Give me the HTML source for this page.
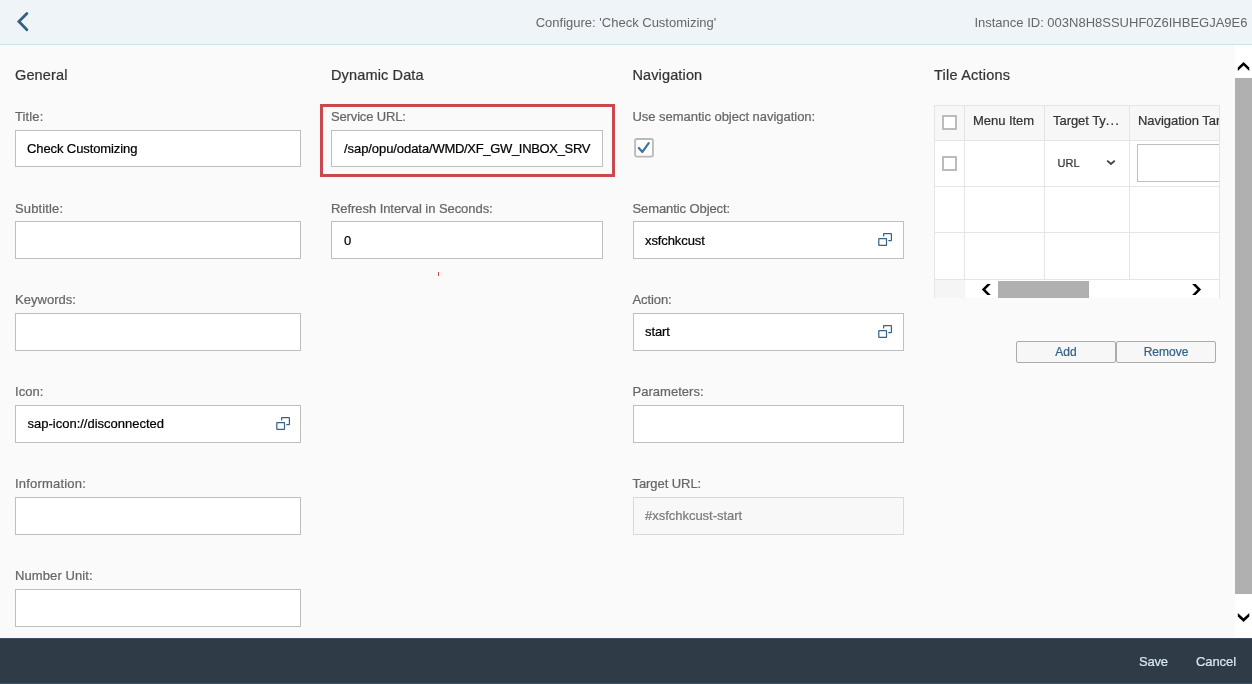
<!DOCTYPE html>
<html>
<head>
<meta charset="utf-8">
<title>Configure: 'Check Customizing'</title>
<style>
*{box-sizing:border-box;margin:0;padding:0}
html,body{width:1252px;height:684px;overflow:hidden}
body{background:#fafafa;font-family:"Liberation Sans",sans-serif;position:relative;color:#333}
#root{position:absolute;left:0;top:0;width:1252px;height:684px;overflow:hidden;will-change:transform;transform:translateZ(0)}
.abs{position:absolute}
#hdr{position:absolute;left:0;top:0;width:1252px;height:45px;background:#eff4f9;border-bottom:1px solid #d1e0ee}
#hdr .t{position:absolute;top:1px;height:44px;line-height:44px;font-size:13px;color:#666;white-space:nowrap}
#ftr{position:absolute;left:0;top:638px;width:1252px;height:46px;background:#2f3c48;border-top:1px solid #3f5161;border-bottom:1px solid #3f5161}
#ftr .b{position:absolute;top:0;height:44px;line-height:46px;font-size:13px;color:#d8e6f3;white-space:nowrap;letter-spacing:-0.25px}
.sec{position:absolute;letter-spacing:0.14px;font-size:14.5px;color:#333;line-height:20px;height:20px;white-space:nowrap;top:65px}
.lbl{position:absolute;font-size:13px;color:#666;line-height:16px;height:16px;white-space:nowrap;letter-spacing:0.03px}
.inp{position:absolute;height:38px;background:#fff;border:1px solid #bfbfbf;font-size:13px;color:#000;line-height:36px;padding-left:11px;white-space:nowrap;overflow:hidden;letter-spacing:-0.1px}
.inp.ro{background:#f8f8f8;border-color:#d9d9d9;color:#7a7a7a}
.c1{left:15px;width:286px}
.c2{left:331px;width:272px}
.c3{left:633px;width:271px}
.vh{position:absolute;width:14px;height:13px}
#tbl{position:absolute;left:934px;top:105px;width:286px;height:193px;overflow:hidden}
#tbl .hl{position:absolute;left:0;width:286px;height:1px;background:#e5e5e5}
#tbl .vl{position:absolute;top:0;width:1px;height:175px;background:#e5e5e5}
#tbl .th{position:absolute;top:6px;height:20px;line-height:20px;font-size:13px;color:#333;white-space:nowrap;letter-spacing:-0.05px}
#tbl .cb{position:absolute;width:15px;height:15px;background:#fff;border:2px solid #bcbcbc}
.btn{position:absolute;top:341px;width:100px;height:22px;background:#f7f7f7;border:1px solid #ababab;border-radius:2px;font-size:12px;line-height:20px;text-align:center;color:#346187}
.sec,.lbl,.inp,#tbl .th,.btn,#ftr .b,.url{-webkit-text-stroke:0.22px currentColor}
</style>
</head>
<body>
<div id="root">

<!-- header -->
<div id="hdr">
  <svg class="abs" style="left:14px;top:9px" width="18" height="26" viewBox="0 0 18 26"><path d="M12.9 4.5 L4.9 12.6 L12.9 20.7" fill="none" stroke="#346187" stroke-width="2.8" stroke-linecap="round" stroke-linejoin="miter"/></svg>
  <div class="t" style="left:0;width:1252px;text-align:center">Configure: 'Check Customizing'</div>
  <div class="t" style="right:4.5px">Instance ID: 003N8H8SSUHF0Z6IHBEGJA9E6</div>
</div>

<!-- column 1 : General -->
<div class="sec" style="left:15px">General</div>
<div class="lbl" style="left:15px;top:109px;letter-spacing:0.13px">Title:</div>
<div class="inp c1" style="top:130px;height:37px">Check Customizing</div>
<div class="lbl" style="left:15px;top:201px;letter-spacing:0.13px">Subtitle:</div>
<div class="inp c1" style="top:221px"></div>
<div class="lbl" style="left:15px;top:292px">Keywords:</div>
<div class="inp c1" style="top:313px"></div>
<div class="lbl" style="left:15px;top:384px">Icon:</div>
<div class="inp c1" style="top:405px;letter-spacing:0;padding-left:11.5px">sap-icon://disconnected</div>
<div class="lbl" style="left:15px;top:476px;letter-spacing:0.2px">Information:</div>
<div class="inp c1" style="top:497px"></div>
<div class="lbl" style="left:15px;top:568px;letter-spacing:0.1px">Number Unit:</div>
<div class="inp c1" style="top:589px"></div>

<!-- column 2 : Dynamic Data -->
<div class="sec" style="left:331px">Dynamic Data</div>
<div class="abs" style="left:320px;top:104px;width:295px;height:73px;border:3px solid #c9494e"></div>
<div class="lbl" style="left:331px;top:109px;letter-spacing:-0.15px">Service URL:</div>
<div class="inp c2" style="top:130px;height:37px;padding-left:12px;letter-spacing:-0.215px"><span style="letter-spacing:-0.07px">/sap/opu/odata/</span><span style="letter-spacing:-0.33px">WMD/XF_GW_INBOX_SRV</span></div>
<div class="lbl" style="left:331px;top:201px;letter-spacing:-0.06px">Refresh Interval in Seconds:</div>
<div class="inp c2" style="top:221px;padding-left:12px;line-height:38px">0</div>
<div class="abs" style="left:438px;top:272px;width:1px;height:4px;background:#d9434b"></div>

<!-- column 3 : Navigation -->
<div class="sec" style="left:632.4px">Navigation</div>
<div class="lbl" style="left:632.5px;top:109px;letter-spacing:-0.03px">Use semantic object navigation:</div>
<svg class="abs" style="left:634px;top:138px" width="20" height="20" viewBox="0 0 20 20"><rect x="1.1" y="1" width="17.8" height="17.7" rx="1.6" fill="#fff" stroke="#b9b9b9" stroke-width="1.8"/><path d="M4.8 10 L8.4 13.9 L14.7 5.1" fill="none" stroke="#3a72a3" stroke-width="2.2" stroke-linecap="round" stroke-linejoin="round"/></svg>
<div class="lbl" style="left:632.5px;top:201px;letter-spacing:-0.09px">Semantic Object:</div>
<div class="inp c3" style="top:221px;line-height:38px">xsfchkcust</div>
<div class="lbl" style="left:632.5px;top:292px;letter-spacing:-0.1px">Action:</div>
<div class="inp c3" style="top:313px">start</div>
<div class="lbl" style="left:632.5px;top:384px">Parameters:</div>
<div class="inp c3" style="top:405px"></div>
<div class="lbl" style="left:632.5px;top:476px;letter-spacing:-0.07px">Target URL:</div>
<div class="inp c3 ro" style="top:497px;letter-spacing:-0.02px">#xsfchkcust-start</div>

<!-- column 4 : Tile Actions -->
<div class="sec" style="left:934px;letter-spacing:0.22px">Tile Actions</div>

<div id="tbl">
  <!-- backgrounds -->
  <div class="abs" style="left:0;top:0;width:286px;height:35px;background:#f7f7f7"></div>
  <div class="abs" style="left:0;top:35px;width:286px;height:140px;background:#fff"></div>
  <!-- horizontal lines -->
  <div class="hl" style="top:0"></div>
  <div class="hl" style="top:35px"></div>
  <div class="hl" style="top:81px"></div>
  <div class="hl" style="top:127px"></div>
  <div class="hl" style="top:174px"></div>
  <!-- vertical lines -->
  <div class="vl" style="left:0;height:193px"></div>
  <div class="vl" style="left:30px"></div>
  <div class="vl" style="left:110px"></div>
  <div class="vl" style="left:195px"></div>
  <div class="vl" style="left:285px;height:193px"></div>
  <!-- header -->
  <div class="cb" style="left:8px;top:10px"></div>
  <div class="th" style="left:39px">Menu Item</div>
  <div class="th" style="left:119px">Target Ty<span style="letter-spacing:1.1px">...</span></div>
  <div class="th" style="left:204px;width:81px;overflow:hidden">Navigation Target</div>
  <!-- row 1 -->
  <div class="cb" style="left:8px;top:51px"></div>
  <div class="abs url" style="left:123.5px;top:50px;font-size:11px;line-height:16px;color:#333;letter-spacing:0.05px">URL</div>
  <svg class="abs" style="left:172px;top:53px" width="10" height="8" viewBox="0 0 10 8"><path d="M1.2 2.6 L5 5.9 L8.8 2.6" fill="none" stroke="#444" stroke-width="1.9" stroke-linejoin="miter"/></svg>
  <div class="abs" style="left:203px;top:39px;width:82px;height:38px;background:#fff;border:1px solid #bfbfbf;border-right:0"></div>
  <!-- horizontal scrollbar -->
  <div class="abs" style="left:1px;top:175px;width:30px;height:18px;background:#f5f5f5"></div>
  <div class="abs" style="left:31px;top:175px;width:254px;height:18px;background:#fff"></div>
  <div class="abs" style="left:64px;top:176px;width:91px;height:17px;background:#b0b0b0"></div>
</div>

<div class="btn" style="left:1016px">Add</div>
<div class="btn" style="left:1116px">Remove</div>

<!-- vertical scrollbar -->
<div class="abs" style="left:1235px;top:45px;width:17px;height:593px;background:#fff"></div>
<div class="abs" style="left:1235px;top:78px;width:17px;height:516px;background:#b0b0b0"></div>


<!-- scrollbar arrows -->
<svg class="abs" style="left:0;top:0;pointer-events:none" width="1252" height="684" viewBox="0 0 1252 684" fill="#000">
  <polygon points="1243.55,61.9 1249.3,67.4 1249.3,70.9 1243.55,65.6 1237.8,70.9 1237.8,67.4"/>
  <polygon points="1243.55,622 1249.3,616.5 1249.3,613 1243.55,618.3 1237.8,613 1237.8,616.5"/>
  <polygon points="981.8,289.5 987.3,284 990.8,284 985.4,289.5 990.8,294.9 987.3,294.9"/>
  <polygon points="1201.1,289.5 1195.6,284 1192.1,284 1197.5,289.5 1192.1,294.9 1195.6,294.9"/>
</svg>

<!-- value help icons -->
<svg class="vh" style="left:275.5px;top:417px" viewBox="0 0 14 13"><g fill="none" stroke="#346187" stroke-width="1.2"><rect x="0.8" y="5.6" width="7.7" height="6.8" rx="0.35"/>
    <path d="M5.6 3.5 V1 Q5.6 0.6 6 0.6 H13 Q13.4 0.6 13.4 1 V7.2 Q13.4 7.6 13 7.6 H10.3"/></g></svg>
<svg class="vh" style="left:878px;top:233px" viewBox="0 0 14 13"><g fill="none" stroke="#346187" stroke-width="1.2"><rect x="0.8" y="5.6" width="7.7" height="6.8" rx="0.35"/>
    <path d="M5.6 3.5 V1 Q5.6 0.6 6 0.6 H13 Q13.4 0.6 13.4 1 V7.2 Q13.4 7.6 13 7.6 H10.3"/></g></svg>
<svg class="vh" style="left:878px;top:325px" viewBox="0 0 14 13"><g fill="none" stroke="#346187" stroke-width="1.2"><rect x="0.8" y="5.6" width="7.7" height="6.8" rx="0.35"/>
    <path d="M5.6 3.5 V1 Q5.6 0.6 6 0.6 H13 Q13.4 0.6 13.4 1 V7.2 Q13.4 7.6 13 7.6 H10.3"/></g></svg>

<!-- footer -->
<div id="ftr">
  <div class="b" style="left:1139px">Save</div>
  <div class="b" style="left:1196px;letter-spacing:-0.08px">Cancel</div>
</div>

</div>
</body>
</html>
